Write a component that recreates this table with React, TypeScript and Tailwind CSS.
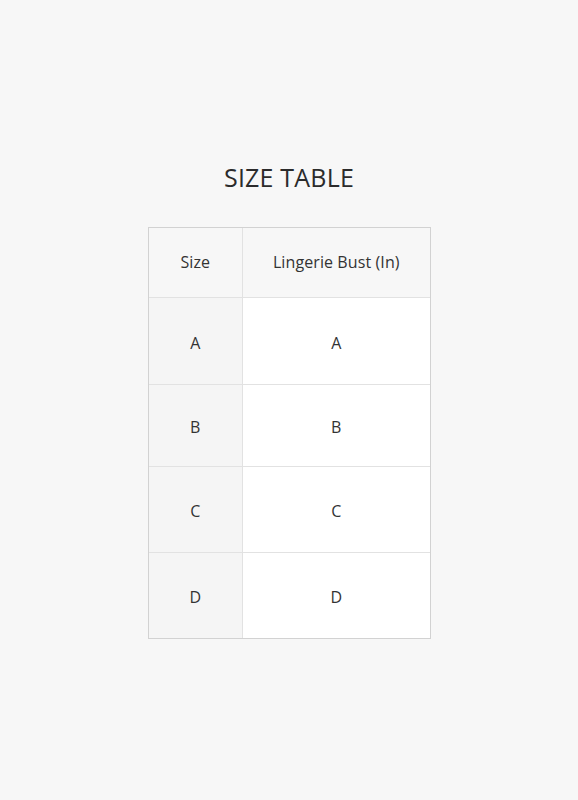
export default function App() {
    const rows = [
        { size: 'A', bust: 'A', h: 'h-[87px]' },
        { size: 'B', bust: 'B', h: 'h-[82px]' },
        { size: 'C', bust: 'C', h: 'h-[86px]' },
        { size: 'D', bust: 'D', h: 'h-[85px]' },
    ];

    return (
        <div className="flex min-h-screen flex-col items-center justify-center bg-[#f7f7f7] font-['Open_Sans',sans-serif] text-[#333]">
            <h1 className="mb-[35px] text-[25px] leading-[30px] tracking-[0.2px] text-[#2b2b2b]">SIZE TABLE</h1>
            <div className="border border-[#d2d2d2]">
                <table className="w-[281px] border-collapse border-hidden text-center text-[16px] tracking-[0.1px]">
                    <thead>
                        <tr className="h-[70px] bg-[#f7f7f7]">
                            <th className="w-[94px] border border-[#e2e2e2] font-normal">Size</th>
                            <th className="border border-[#e2e2e2] font-normal">Lingerie Bust (In)</th>
                        </tr>
                    </thead>
                    <tbody>
                        {rows.map((r) => (
                            <tr key={r.size} className={r.h}>
                                <td className="border border-[#e2e2e2] bg-[#f5f5f5] pt-[3px]">{r.size}</td>
                                <td className="border border-[#e2e2e2] bg-white pt-[3px]">{r.bust}</td>
                            </tr>
                        ))}
                    </tbody>
                </table>
            </div>
        </div>
    );
}
